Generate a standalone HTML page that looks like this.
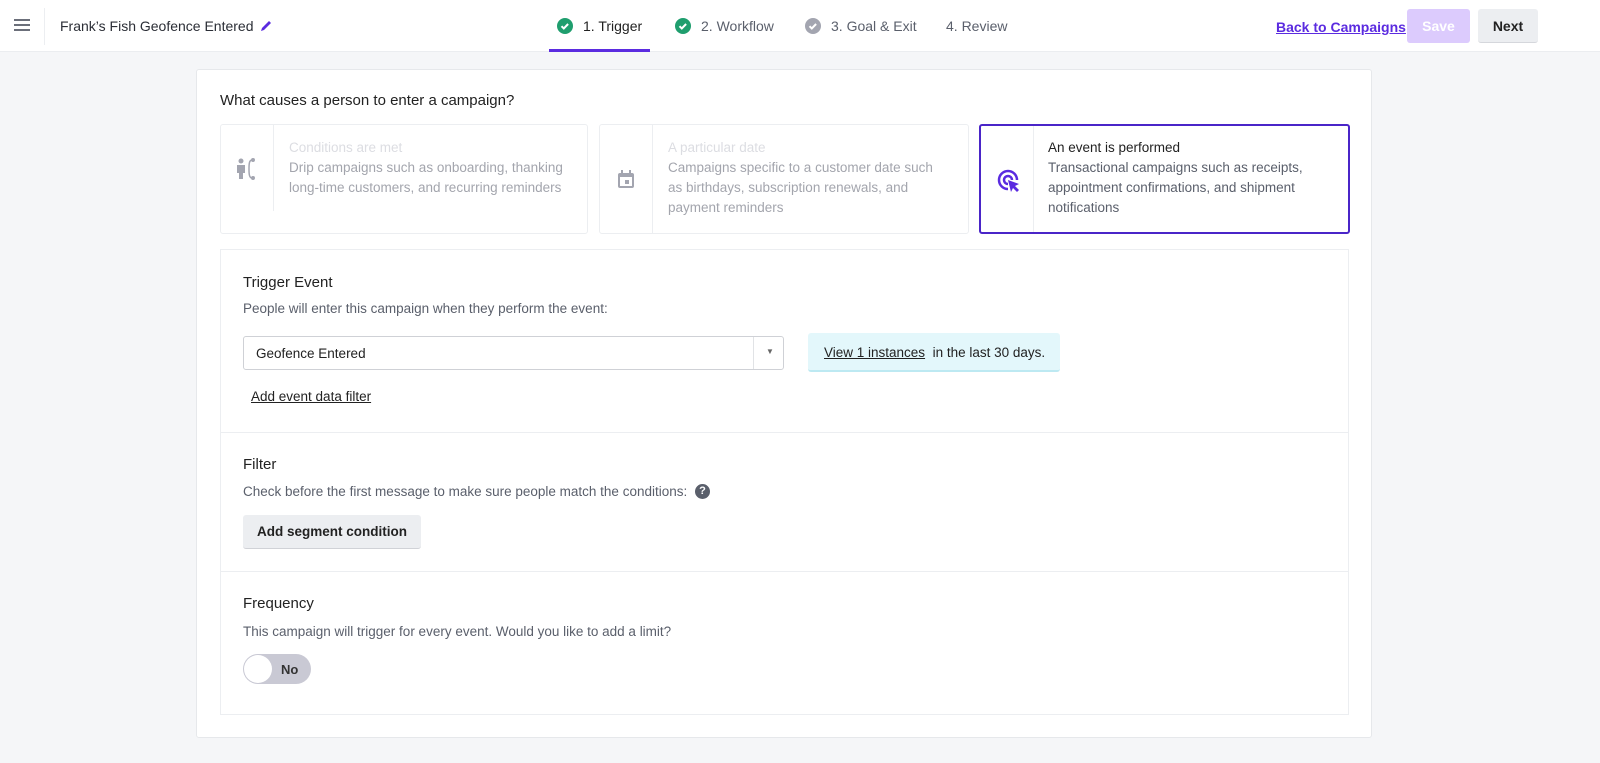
<!DOCTYPE html>
<html><head><meta charset="utf-8"><style>
*{box-sizing:border-box;margin:0;padding:0}
body{width:1600px;height:763px;background:#f5f6f8;font-family:"Liberation Sans",sans-serif;color:#222;position:relative;overflow:hidden;font-size:13.5px}
.hdr{position:absolute;left:0;top:0;width:1600px;height:52px;background:#fff;border-bottom:1px solid #ebedf0}
.abs{position:absolute}
.card{position:absolute;top:124px;height:110px;background:#fff;border:1px solid #eceef1;border-radius:3px}
.card .ic{position:absolute;left:0;top:0;width:53px;height:86px;border-right:1px solid #eceef1}
.card .t{position:absolute;left:68px;top:13px;font-size:13.5px;line-height:20px;color:#a3a5ad;width:284px}
.card .t b{display:block;font-weight:normal;color:#dcdde2;margin-bottom:0}
.sec{position:absolute;left:220px;width:1129px;border:1px solid #eceef1;background:#fff}
h3{font-size:15px;font-weight:normal;color:#222}
.p{color:#5a5f6b;font-size:13.5px}
</style></head><body>
<div class="hdr">
 <div class="abs" style="left:14px;top:19px;width:16px;height:2px;background:#6b6f7a;box-shadow:0 5px 0 #6b6f7a,0 10px 0 #6b6f7a"></div>
 <div class="abs" style="left:44px;top:8px;width:1px;height:37px;background:#eceef1"></div>
 <div class="abs" style="left:60px;top:18px;font-size:14px;color:#2b2e36">Frank’s Fish Geofence Entered</div>
 <svg class="abs" style="left:259px;top:19px" width="14" height="14" viewBox="0 0 14 14"><path d="M2 12l1-3 7-7 2 2-7 7z" fill="#5b2be0"/></svg>
 <svg class="abs" style="left:557px;top:18px" width="16" height="16"><circle cx="8" cy="8" r="8" fill="#1f9e6e"/><path d="M4.5 8.2l2.3 2.3 4.3-4.5" stroke="#fff" stroke-width="2" fill="none"/></svg>
 <div class="abs" style="left:583px;top:18px;font-size:14px;color:#222">1. Trigger</div>
 <div class="abs" style="left:549px;top:49px;width:101px;height:3px;background:#5b2be0"></div>
 <svg class="abs" style="left:675px;top:18px" width="16" height="16"><circle cx="8" cy="8" r="8" fill="#1f9e6e"/><path d="M4.5 8.2l2.3 2.3 4.3-4.5" stroke="#fff" stroke-width="2" fill="none"/></svg>
 <div class="abs" style="left:701px;top:18px;font-size:14px;color:#5a5f6b">2. Workflow</div>
 <svg class="abs" style="left:805px;top:18px" width="16" height="16"><circle cx="8" cy="8" r="8" fill="#a3a5b0"/><path d="M4.5 8.2l2.3 2.3 4.3-4.5" stroke="#fff" stroke-width="2" fill="none"/></svg>
 <div class="abs" style="left:831px;top:18px;font-size:14px;color:#5a5f6b">3. Goal &amp; Exit</div>
 <div class="abs" style="left:946px;top:18px;font-size:14px;color:#5a5f6b">4. Review</div>
 <div class="abs" style="left:1276px;top:19px;font-size:14px;font-weight:bold;color:#5b2be0;text-decoration:underline">Back to Campaigns</div>
 <div class="abs" style="left:1407px;top:9px;width:63px;height:34px;background:#dccbfd;border-radius:3px;color:#fff;font-weight:bold;font-size:14px;text-align:center;line-height:34px">Save</div>
 <div class="abs" style="left:1478px;top:9px;width:60px;height:34px;background:#eceef1;border-radius:3px;color:#222;font-weight:bold;font-size:14px;text-align:center;line-height:34px;border-bottom:1px solid #d5d7dc">Next</div>
</div>
<div class="abs" style="left:196px;top:69px;width:1176px;height:669px;background:#fff;border:1px solid #e6e8eb;border-radius:3px"></div>
<div class="abs" style="left:220px;top:92px;font-size:15px;color:#222">What causes a person to enter a campaign?</div>
<div class="card" style="left:220px;width:368px"><div class="ic"><svg style="position:absolute;left:13px;top:31px" width="26" height="26" viewBox="0 0 26 26"><circle cx="7" cy="5" r="2.5" fill="#a3a5b0"/><path d="M3 9h8v8h-2v6h-4v-6h-2z" fill="#a3a5b0"/><path d="M18 4c-3 0-3 5-3 9s0 9 3 9" stroke="#a3a5b0" stroke-width="1.5" fill="none"/><circle cx="19" cy="4" r="2" fill="#a3a5b0"/><circle cx="19" cy="22" r="2" fill="#a3a5b0"/></svg></div><div class="t"><b>Conditions are met</b>Drip campaigns such as onboarding, thanking long-time customers, and recurring reminders</div></div>
<div class="card" style="left:599px;width:370px"><div class="ic" style="height:108px"><svg style="position:absolute;left:17px;top:45px" width="18" height="19" viewBox="0 0 18 19"><rect x="1" y="3" width="16" height="15" rx="2" fill="#a3a5b0"/><rect x="3" y="7" width="12" height="9" fill="#fff"/><rect x="8" y="10" width="4" height="4" fill="#a3a5b0"/><rect x="4" y="0" width="2" height="4" fill="#a3a5b0"/><rect x="12" y="0" width="2" height="4" fill="#a3a5b0"/></svg></div><div class="t" style="width:278px"><b>A particular date</b>Campaigns specific to a customer date such as birthdays, subscription renewals, and payment reminders</div></div>
<div class="card" style="left:979px;width:371px;border:2px solid #4a25c8"><div class="ic" style="height:106px;top:0"><svg style="position:absolute;left:15px;top:42px" width="26" height="26" viewBox="0 0 26 26"><path d="M12 21a9 9 0 1 1 9-9" stroke="#5b2be0" stroke-width="2.5" fill="none"/><path d="M12 16a4 4 0 1 1 4-4" stroke="#5b2be0" stroke-width="2.5" fill="none"/><path d="M12 12l11 4-4 2 4 4-2 2-4-4-2 4z" fill="#5b2be0"/></svg></div><div class="t" style="left:67px;top:12px;color:#5a5f6b"><b style="color:#222">An event is performed</b>Transactional campaigns such as receipts, appointment confirmations, and shipment notifications</div></div>
<div class="sec" style="top:249px;height:184px;border-bottom:none">
 <h3 class="abs" style="left:22px;top:24px">Trigger Event</h3>
 <div class="abs p" style="left:22px;top:51px">People will enter this campaign when they perform the event:</div>
 <div class="abs" style="left:22px;top:86px;width:541px;height:34px;border:1px solid #cfd1d6;border-radius:3px"><span class="abs" style="left:12px;top:9px;font-size:13.5px">Geofence Entered</span><div class="abs" style="left:509px;top:0;width:1px;height:32px;background:#e1e3e6"></div><span class="abs" style="left:522px;top:10px;font-size:8px;color:#666">▼</span></div>
 <div class="abs" style="left:587px;top:83px;width:252px;height:39px;background:#e3f7fb;border-bottom:2px solid #bde9f2;border-radius:3px;font-size:13.5px;line-height:39px;padding-left:16px"><u>View 1 instances</u>&nbsp; in the last 30 days.</div>
 <div class="abs" style="left:30px;top:139px;font-size:13.5px;text-decoration:underline">Add event data filter</div>
</div>
<div class="sec" style="top:432px;height:140px;border-bottom:none">
 <h3 class="abs" style="left:22px;top:23px">Filter</h3>
 <div class="abs p" style="left:22px;top:51px">Check before the first message to make sure people match the conditions:</div>
 <div class="abs" style="left:474px;top:51px;width:15px;height:15px;border-radius:50%;background:#5a5f6b;color:#fff;font-size:11px;font-weight:bold;text-align:center;line-height:15px">?</div>
 <div class="abs" style="left:22px;top:82px;width:178px;height:34px;background:#eceef1;border-bottom:1px solid #d0d2d7;border-radius:3px;font-weight:bold;font-size:13.5px;text-align:center;line-height:34px">Add segment condition</div>
</div>
<div class="sec" style="top:571px;height:144px">
 <h3 class="abs" style="left:22px;top:23px">Frequency</h3>
 <div class="abs p" style="left:22px;top:52px">This campaign will trigger for every event. Would you like to add a limit?</div>
 <div class="abs" style="left:22px;top:82px;width:68px;height:30px;border-radius:15px;background:#c9c9d4"><div class="abs" style="left:1px;top:1px;width:28px;height:28px;border-radius:50%;background:#fff"></div><span class="abs" style="left:38px;top:8px;font-size:13px;font-weight:bold;color:#333">No</span></div>
</div>
</body></html>
